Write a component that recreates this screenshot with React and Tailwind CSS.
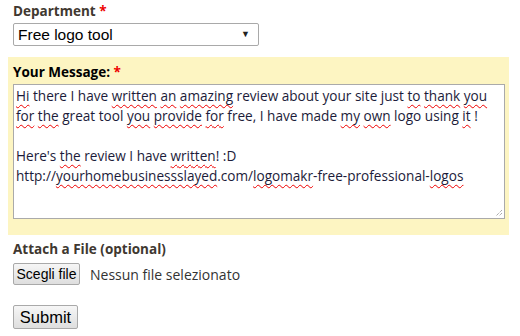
import React from 'react';

const W = ({ children }) => (
    <span className="underline decoration-wavy decoration-[#e00] decoration-1 underline-offset-[3px]">{children}</span>
);

export default function App() {
    return (
        <div className="w-[520px] h-[336px] bg-white overflow-hidden font-['Open_Sans',sans-serif] relative">
            <div className="pl-[13px] pt-[2px]">
                <label className="block text-[13.5px] font-bold text-[#403830] leading-[18px]">
                    Department <span className="text-[#e00]">*</span>
                </label>
                <div className="relative mt-[3px] w-[246px] h-[23px] border border-[#a9a9a9] rounded-[2px] bg-white">
                    <span className="absolute left-[4px] top-[0px] text-[15.5px] leading-[21px] text-black font-['Liberation_Sans',Arial,sans-serif]">
                        Free logo tool
                    </span>
                    <span className="absolute right-[8px] top-[5px] text-[9px] leading-[10px] text-[#222]">▼</span>
                </div>
            </div>

            <div className="ml-[8px] mt-[11px] w-[501px] bg-[#fdf5c2] pl-[5px] pr-[4px] pt-[6px] pb-[16px]">
                <label className="block text-[13.5px] font-bold text-black leading-[18px]">
                    Your Message: <span className="text-[#e00]">*</span>
                </label>
                <div className="relative mt-[3px] h-[135px] border border-[#aaa] bg-white px-[2px] pt-[1px] text-[13.6px] leading-[20px] text-[#1c1c3a]">
                    <p>
                        <W>Hi</W> there I have <W>written</W> <W>an</W> <W>amazing</W> review about your site just <W>to</W> <W>thank</W> <W>you</W>
                    </p>
                    <p>
                        <W>for</W> <W>the</W> great tool <W>you</W> <W>provide</W> <W>for</W> free, I have made <W>my</W> <W>own</W> logo using <W>it</W> !
                    </p>
                    <p>&nbsp;</p>
                    <p>
                        Here's <W>the</W> review I have <W>written</W>! :D
                    </p>
                    <p>
                        http://<W>yourhomebusinessslayed</W>.com/<W>logomakr</W>-free-professional-<W>logos</W>
                    </p>
                    <svg className="absolute right-[1px] bottom-[1px]" width="8" height="8" viewBox="0 0 8 8">
                        <path d="M7 1 L1 7 M7 4 L4 7" stroke="#888" strokeWidth="1" strokeDasharray="1 1" />
                    </svg>
                </div>
            </div>

            <div className="pl-[13px] pt-[5px]">
                <label className="block text-[13.5px] font-bold text-[#403830] leading-[18px]">
                    Attach a File (optional)
                </label>
                <div className="flex items-center mt-[5px] gap-[10px]">
                    <button className="h-[22px] w-[67px] border border-[#a9a9a9] rounded-[2px] bg-gradient-to-b from-[#f6f6f6] to-[#dedede] text-[14px] leading-[20px] text-black font-['Liberation_Sans',Arial,sans-serif] whitespace-nowrap">
                        Scegli file
                    </button>
                    <span className="text-[14px] text-[#333]">Nessun file selezionato</span>
                </div>
                <button className="mt-[20px] h-[24px] w-[65px] border border-[#a9a9a9] rounded-[2px] bg-gradient-to-b from-[#f6f6f6] to-[#dedede] text-[16.5px] leading-[22px] text-black font-['Liberation_Sans',Arial,sans-serif]">
                    Submit
                </button>
            </div>
        </div>
    );
}
